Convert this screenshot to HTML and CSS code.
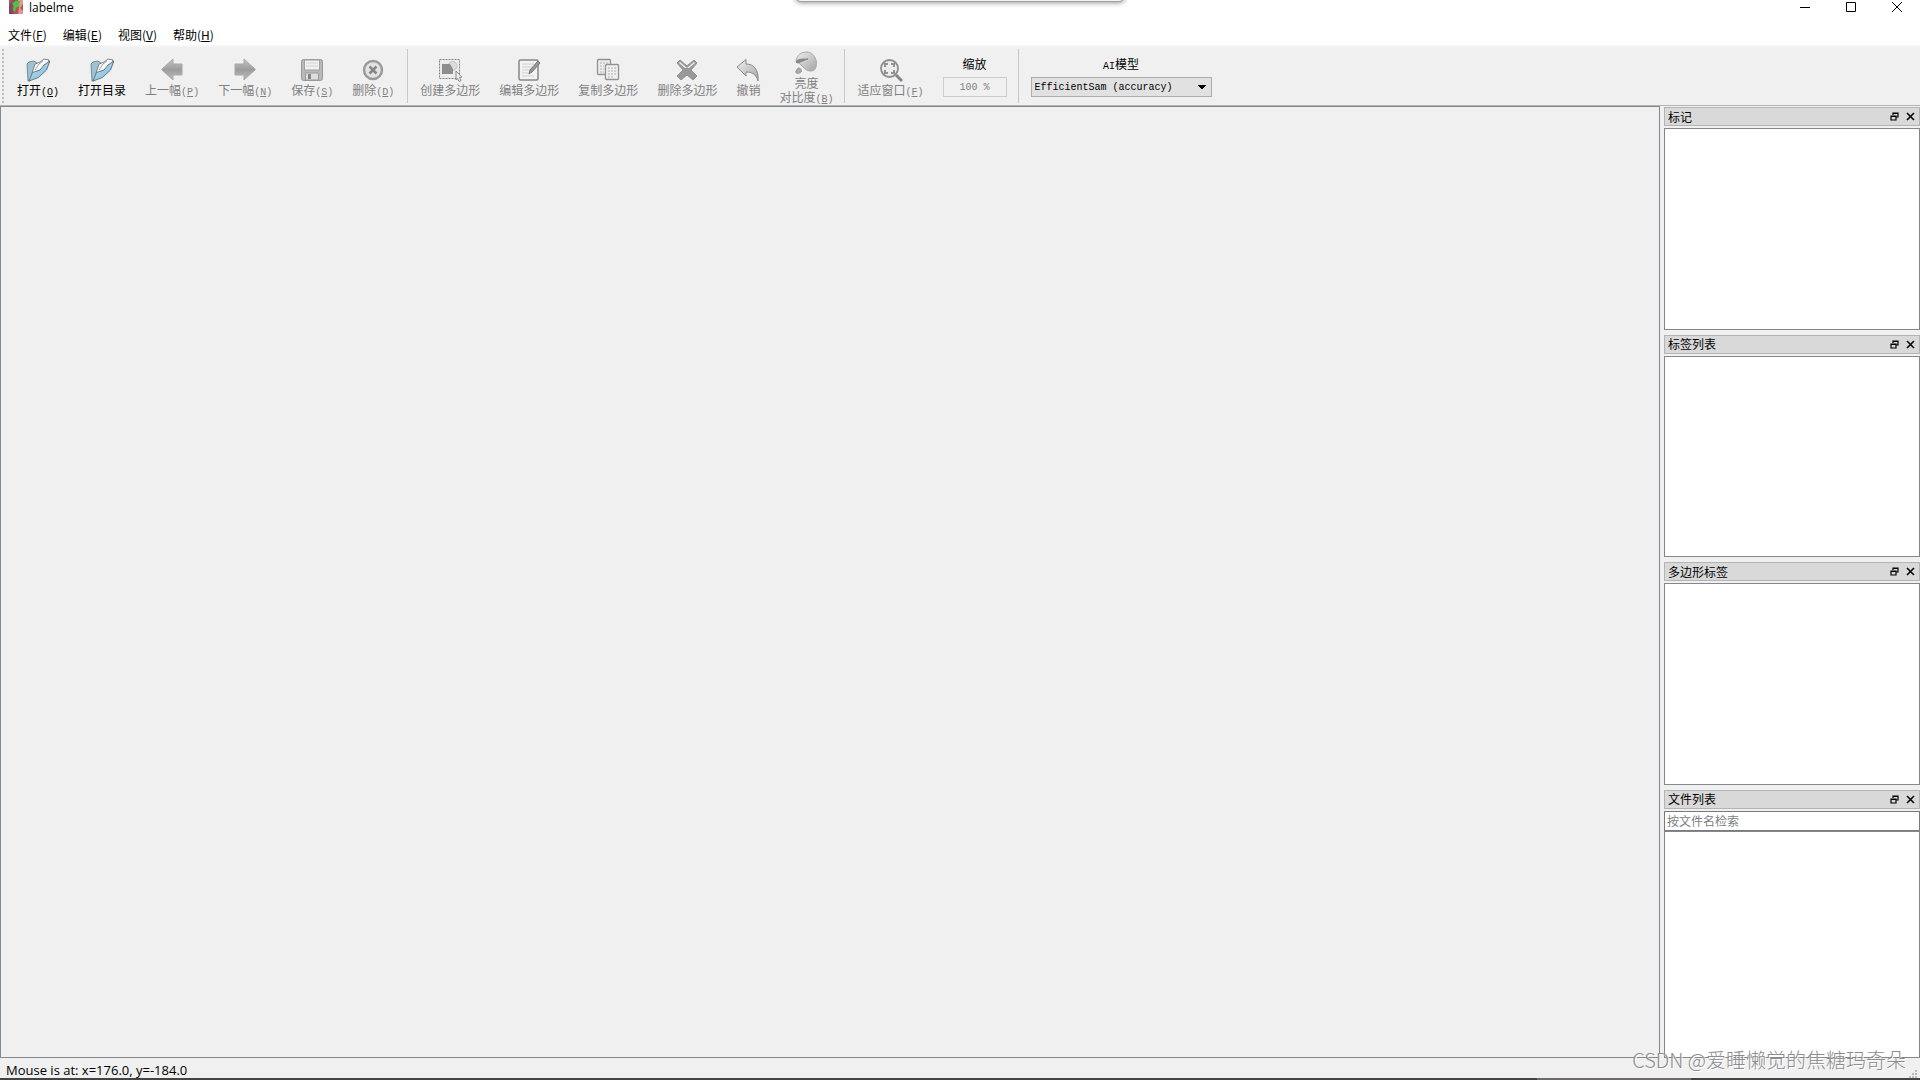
FILE: index.html
```
<!DOCTYPE html>
<html lang="zh-CN">
<head>
    <meta charset="UTF-8">
    <meta name="viewport" content="width=device-width, initial-scale=1.0">
    <title>labelme</title>
    <link rel="stylesheet" href="styles.css">
</head>
<body>
    <svg class="defs" width="0" height="0" aria-hidden="true">
        <defs>
            <linearGradient id="blue" x1="0" y1="0" x2="1" y2="1">
                <stop offset="0" stop-color="#c9e6f4"/>
                <stop offset="1" stop-color="#78b2d2"/>
            </linearGradient>
            <linearGradient id="grey" x1="0" y1="0" x2="0" y2="1">
                <stop offset="0" stop-color="#c6c6c6"/>
                <stop offset="0.5" stop-color="#9c9c9c"/>
                <stop offset="1" stop-color="#bcbcbc"/>
            </linearGradient>
            <linearGradient id="light" x1="0" y1="0" x2="1" y2="1">
                <stop offset="0" stop-color="#f0f0f0"/>
                <stop offset="1" stop-color="#a4a4a4"/>
            </linearGradient>
            <symbol id="folder" viewBox="0 0 24 24">
                <path d="M1 6 3 4l5-1 3 2v8L4 23H2z" fill="#9fc3d6" stroke="#66747b" stroke-width=".8"/>
                <path d="M6 15 9 6l5-2 4-3 5 1-3 8-13 9z" fill="#fafafa" stroke="#707578" stroke-width=".9"/>
                <path d="m9 12 4-6 4-3" fill="none" stroke="#85898b" stroke-width=".8"/>
                <path d="m3 23 3.500-8.500L14 12l4-5 6-4-3.500 9-8 7.500z" fill="url(#blue)" stroke="#51707f" stroke-width=".9"/>
            </symbol>
            <symbol id="float" viewBox="0 0 9 9">
                <path d="M3 3V1h5v4H6M1 4h5v4H1zM3 1.500h5M1 4.500h5" fill="none" stroke="#000" stroke-width="1.200"/>
            </symbol>
            <symbol id="cross" viewBox="0 0 9 9">
                <path d="m1 1 7 7M8 1 1 8" fill="none" stroke="#000" stroke-width="1.600"/>
            </symbol>
        </defs>
    </svg>

    <header class="title-bar">
        <svg class="app-icon" width="14" height="14" viewBox="0 0 14 14">
            <path d="M0 0h14v14H0z" fill="#b0565a"/>
            <path d="M0 5 4 0h2L3 8l2 6H0z" fill="#7d4a60"/>
            <path d="M9 0h5v4l-3 4 3 3v3H9l1-6z" fill="#dc9a8c"/>
            <path d="m3 3 4-2h4l-1 5-3 2-1 4-2-2 1-3z" fill="#4fc048"/>
        </svg>
        <h1>labelme</h1>
        <div class="window-buttons">
            <button aria-label="最小化"><svg width="10" height="10"><path d="M0 5.500h10" stroke="#000"/></svg></button>
            <button aria-label="最大化"><svg width="10" height="10"><path d="M.5.5h9v9h-9z" fill="none" stroke="#000"/></svg></button>
            <button aria-label="关闭"><svg width="10" height="10"><path d="m0 0 10 10M10 0 0 10" stroke="#000"/></svg></button>
        </div>
        <div class="drop-tab"></div>
    </header>

    <nav class="menu-bar">
        <button>文件(<u>F</u>)</button>
        <button>编辑(<u>E</u>)</button>
        <button>视图(<u>V</u>)</button>
        <button>帮助(<u>H</u>)</button>
    </nav>

    <div class="toolbar">
        <div class="grip"></div>
        <div class="tools">
            <button class="tool">
                <svg width="24" height="24"><use href="#folder"/></svg>
                <span>打开<kbd>(<u>O</u>)</kbd></span>
            </button>
            <button class="tool">
                <svg width="24" height="24"><use href="#folder"/></svg>
                <span>打开目录</span>
            </button>
            <button class="tool" disabled>
                <svg width="24" height="24" viewBox="0 0 24 24"><path d="M1.500 11.500 13 1v5h9v11h-9v5z" fill="url(#grey)" stroke="#a8a8a8"/></svg>
                <span>上一幅<kbd>(<u>P</u>)</kbd></span>
            </button>
            <button class="tool" disabled>
                <svg width="24" height="24" viewBox="0 0 24 24"><path d="M22.500 11.500 11 1v5H2v11h9v5z" fill="url(#grey)" stroke="#a8a8a8"/></svg>
                <span>下一幅<kbd>(<u>N</u>)</kbd></span>
            </button>
            <button class="tool" disabled>
                <svg width="24" height="24" viewBox="0 0 24 24">
                    <rect x="1.500" y="1.500" width="21" height="21" rx="2" fill="#b9b9b9" stroke="#999"/>
                    <path d="M4.500 2h15v10h-15z" fill="#f1f1f1" stroke="#a0a0a0"/>
                    <path d="M6 5h12M6 8h12" stroke="#d3d3d3"/>
                    <path d="M5.500 15h13v7h-13z" fill="#dedede" stroke="#999"/>
                    <path d="M8 16h3v5H8z" fill="#858585"/>
                </svg>
                <span>保存<kbd>(<u>S</u>)</kbd></span>
            </button>
            <button class="tool" disabled>
                <svg width="24" height="24" viewBox="0 0 24 24">
                    <circle cx="12" cy="12" r="9" fill="#e3e3e3" stroke="#9b9b9b" stroke-width="2.500"/>
                    <path d="m8.500 8.500 7 7m0-7-7 7" stroke="#858585" stroke-width="2.500"/>
                </svg>
                <span>删除<kbd>(<u>D</u>)</kbd></span>
            </button>
        </div>
        <div class="tools">
            <button class="tool" disabled>
                <svg width="24" height="24" viewBox="0 0 24 24">
                    <path d="M1.500 1.500h20v19h-20z" fill="#ececec" stroke="#858585" stroke-dasharray="2 1"/>
                    <circle cx="14.500" cy="8" r="4.500" fill="#dcdcdc" stroke="#c5c5c5"/>
                    <path d="M4 6h8l3 5v5H4z" fill="#8e8e8e"/>
                    <path d="m18 13 6 6-2.500.5 1.500 3-2 1-1.500-3L18 22z" fill="#eee" stroke="#898989"/>
                </svg>
                <span>创建多边形</span>
            </button>
            <button class="tool" disabled>
                <svg width="24" height="24" viewBox="0 0 24 24">
                    <rect x="2" y="2" width="19" height="20" rx="1.500" fill="#f3f3f3" stroke="#868686" stroke-width="1.500"/>
                    <path d="M5 6h12M5 9h10M5 12h8M5 15h7M5 18h12" stroke="#cfcfcf"/>
                    <path d="m12 16 1-4 8-9 2 2-8 9z" fill="#999" stroke="#777"/>
                </svg>
                <span>编辑多边形</span>
            </button>
            <button class="tool" disabled>
                <svg width="24" height="24" viewBox="0 0 24 24">
                    <rect x="1.500" y="1.500" width="13" height="15" rx="1" fill="#ededed" stroke="#929292" stroke-width="1.300"/>
                    <path d="M4 5h8M4 8h4M4 11h4M4 14h4" stroke="#b0b0b0" stroke-dasharray="2 1"/>
                    <rect x="9.500" y="6.500" width="13" height="15" rx="1" fill="#f0f0f0" stroke="#929292" stroke-width="1.300"/>
                    <path d="M12 10h8M12 13h8M12 16h8M12 19h6" stroke="#b0b0b0" stroke-dasharray="2 1"/>
                </svg>
                <span>复制多边形</span>
            </button>
            <button class="tool" disabled>
                <svg width="24" height="24" viewBox="0 0 24 24">
                    <path d="m2 5 3-3 7 6 7-6 3 3-6 7 6 6-4 4-6-5-6 5-4-4 6-6z" fill="#999" stroke="#929292"/>
                    <path d="M4 5 5 4l7 6 7-6 1 1-6 5H10z" fill="#efefef"/>
                </svg>
                <span>删除多边形</span>
            </button>
            <button class="tool" disabled>
                <svg width="24" height="24" viewBox="0 0 24 24"><path d="m1 9 9-7.500v4.500c8 0 13 6 12 17-2-7-6-9-12-9v4z" fill="url(#light)" stroke="#8b8b8b"/></svg>
                <span>撤销</span>
            </button>
            <button class="tool" disabled>
                <svg width="24" height="24" viewBox="0 0 24 24">
                    <path d="M2 10C3 4 7 1 13 1c7 0 11 9 9 15-1 5-7 5-11 2l-5-5z" fill="url(#light)" stroke="#aaa"/>
                    <path d="M2 11c1-3 6-3 12-3-4 1-6 3-11 4z" fill="#888" stroke="#888"/>
                    <path d="M4 17c3 0 4 2 3 4-2 2-6 2-5-1z" fill="#aaa" stroke="#999"/>
                </svg>
                <span>亮度</span>
                <span>对比度<kbd>(<u>B</u>)</kbd></span>
            </button>
        </div>
        <div class="tools">
            <button class="tool" disabled>
                <svg width="24" height="24" viewBox="0 0 24 24">
                    <path d="m17 17 6 6" stroke="#858585" stroke-width="3"/>
                    <circle cx="10.500" cy="10.500" r="8.500" fill="#ececec" stroke="#8e8e8e" stroke-width="1.800"/>
                    <path d="M6 9V6h3m3 0h3v3m0 3v3h-3m-3 0H6v-3" fill="none" stroke="#919191" stroke-width="2"/>
                </svg>
                <span>适应窗口<kbd>(<u>F</u>)</kbd></span>
            </button>
            <div class="field">
                <label for="zoom">缩放</label>
                <input id="zoom" type="text" value="100 %" disabled>
            </div>
        </div>
        <div class="tools">
            <div class="field">
                <label for="model"><kbd>AI</kbd>模型</label>
                <select id="model">
                    <option>EfficientSam (accuracy)</option>
                </select>
            </div>
        </div>
    </div>

    <main class="workspace">
        <div class="canvas"></div>
        <aside class="docks">
            <section class="dock">
                <div class="dock-title">
                    <h2>标记</h2>
                    <button aria-label="浮动"><svg width="9" height="9"><use href="#float"/></svg></button>
                    <button aria-label="关闭"><svg width="9" height="9"><use href="#cross"/></svg></button>
                </div>
                <div class="list"></div>
            </section>
            <section class="dock">
                <div class="dock-title">
                    <h2>标签列表</h2>
                    <button aria-label="浮动"><svg width="9" height="9"><use href="#float"/></svg></button>
                    <button aria-label="关闭"><svg width="9" height="9"><use href="#cross"/></svg></button>
                </div>
                <div class="list"></div>
            </section>
            <section class="dock">
                <div class="dock-title">
                    <h2>多边形标签</h2>
                    <button aria-label="浮动"><svg width="9" height="9"><use href="#float"/></svg></button>
                    <button aria-label="关闭"><svg width="9" height="9"><use href="#cross"/></svg></button>
                </div>
                <div class="list"></div>
            </section>
            <section class="dock files">
                <div class="dock-title">
                    <h2>文件列表</h2>
                    <button aria-label="浮动"><svg width="9" height="9"><use href="#float"/></svg></button>
                    <button aria-label="关闭"><svg width="9" height="9"><use href="#cross"/></svg></button>
                </div>
                <input class="search" type="text" placeholder="按文件名检索" aria-label="按文件名检索">
                <div class="list"></div>
            </section>
        </aside>
    </main>

    <footer class="status-bar">
        <span>Mouse is at: x=176.0, y=-184.0</span>
        <svg class="size-grip" width="8" height="8" viewBox="0 0 8 8"><path d="M6 0h2v2H6zM3 3h2v2H3zM6 3h2v2H6zM0 6h2v2H0zM3 6h2v2H3zM6 6h2v2H6z" fill="#bdbdbd"/></svg>
    </footer>
    <div class="watermark">CSDN @爱睡懒觉的焦糖玛奇朵</div>
</body>
</html>
```

FILE: styles.css
```
* {
    box-sizing: border-box;
}
body {
    margin: 0;
    height: 100vh;
    display: flex;
    flex-direction: column;
    overflow: hidden;
    background: #f0f0f0;
    color: #000;
    font-family: "Noto Sans CJK SC", sans-serif;
    font-size: 12px;
    line-height: 14px;
}
button {
    margin: 0;
    padding: 0;
    border: 0;
    background: none;
    color: inherit;
    font: inherit;
}
h1,
h2 {
    margin: 0;
    font-size: 12px;
    font-weight: normal;
}
kbd {
    font-family: "Liberation Mono", monospace;
    font-size: 10px;
    line-height: 10px;
}
.defs {
    position: absolute;
}

/* title bar and menus */
.title-bar {
    position: relative;
    display: flex;
    align-items: flex-start;
    height: 24px;
    padding-left: 9px;
    background: #fff;
}
.title-bar h1 {
    flex: 1;
    margin-left: 6px;
    font-family: "Open Sans", sans-serif;
    line-height: 16px;
}
.window-buttons {
    display: flex;
}
.window-buttons button {
    width: 46px;
    height: 14px;
}
.window-buttons svg {
    display: block;
    margin: 0 auto;
}
.drop-tab {
    position: absolute;
    top: -10px;
    left: 50%;
    width: 330px;
    height: 12px;
    margin-left: -165px;
    border: 1px solid #a0a0a0;
    border-radius: 0 0 6px 6px;
    background: #f4f4f4;
    box-shadow: 0 1px 5px rgba(0, 0, 0, 0.4);
}
.menu-bar {
    display: flex;
    gap: 16px;
    height: 23px;
    padding: 0 8px;
    border-bottom: 2px solid #f6f6f6;
    background: #fff;
}

/* toolbar */
.toolbar {
    display: flex;
    height: 59px;
    border-bottom: 1px solid #b4b4b4;
}
.grip {
    width: 2px;
    margin: 2px;
    background: repeating-linear-gradient(#bbb 0 2px, #f0f0f0 2px 4px);
}
.tools {
    display: flex;
    align-items: center;
    gap: 19px;
    margin: 2px 0;
    padding: 2px 11px 0 12px;
    border-left: 1px solid #c8c8c8;
}
.grip + .tools {
    padding-left: 11px;
    padding-right: 13px;
    border-left: 0;
}
.tool {
    display: flex;
    flex-direction: column;
    align-items: center;
    white-space: nowrap;
}
.tool svg {
    margin-bottom: 1px;
}
.tool span {
    height: 14px;
}
.tool:disabled {
    color: #808080;
}
.field {
    display: flex;
    flex-direction: column;
    align-items: center;
    gap: 6px;
}
.field label {
    height: 14px;
}
.field input,
.field select {
    height: 20px;
    border: 1px solid #adadad;
    font-family: "Liberation Mono", monospace;
    font-size: 10px;
}
.field input {
    width: 64px;
    border-color: #ccc;
    background: #f0f0f0;
    color: #808080;
    text-align: center;
}
.field select {
    width: 181px;
    padding: 0 3px;
    appearance: none;
    border-radius: 0;
    background: linear-gradient(to top right, transparent 50%, #000 50%) no-repeat right 9px center / 4px 4px,
        linear-gradient(to top left, transparent 50%, #000 50%) no-repeat right 5px center / 4px 4px #e1e1e1;
    color: #000;
}

/* canvas and docks */
.workspace {
    flex: 1;
    display: flex;
    gap: 4px;
    min-height: 0;
}
.canvas {
    flex: 1;
    border: 1px solid #828790;
}
.docks {
    display: flex;
    flex-direction: column;
    gap: 5px;
    width: 256px;
    padding-top: 1px;
}
.dock {
    flex: 223 1 0;
    display: flex;
    flex-direction: column;
}
.dock.files {
    flex-grow: 269;
}
.dock-title {
    display: flex;
    align-items: center;
    gap: 7px;
    height: 19px;
    margin-bottom: 2px;
    padding: 0 4px 0 3px;
    border: 1px solid #b4b4b4;
    background: #d9d9d9;
}
.dock-title h2 {
    flex: 1;
}
.dock-title svg {
    display: block;
}
.list {
    flex: 1;
    border: 1px solid #828790;
    background: #fff;
}
.search {
    height: 20px;
    padding: 0 2px;
    border: 1px solid #7a7a7a;
    background: #fff;
    font: inherit;
}
.search::placeholder {
    color: #808080;
}

/* status bar */
.status-bar {
    display: flex;
    align-items: center;
    justify-content: space-between;
    height: 22px;
    padding: 3px 3px 0 6px;
    border-bottom: 2px solid #444;
    border-image: linear-gradient(to right, #444 80%, #6c6a6a 80% 88%, #444 88%) 2;
    border-width: 0 0 2px;
    font-family: "Open Sans", sans-serif;
    font-size: 13px;
}
.size-grip {
    align-self: flex-end;
}
.watermark {
    position: absolute;
    right: 14px;
    bottom: 8px;
    color: #8c8c8c;
    font-size: 20px;
    font-weight: 300;
    line-height: 24px;
    text-shadow: 1px 1px 0 #fff;
}
```
